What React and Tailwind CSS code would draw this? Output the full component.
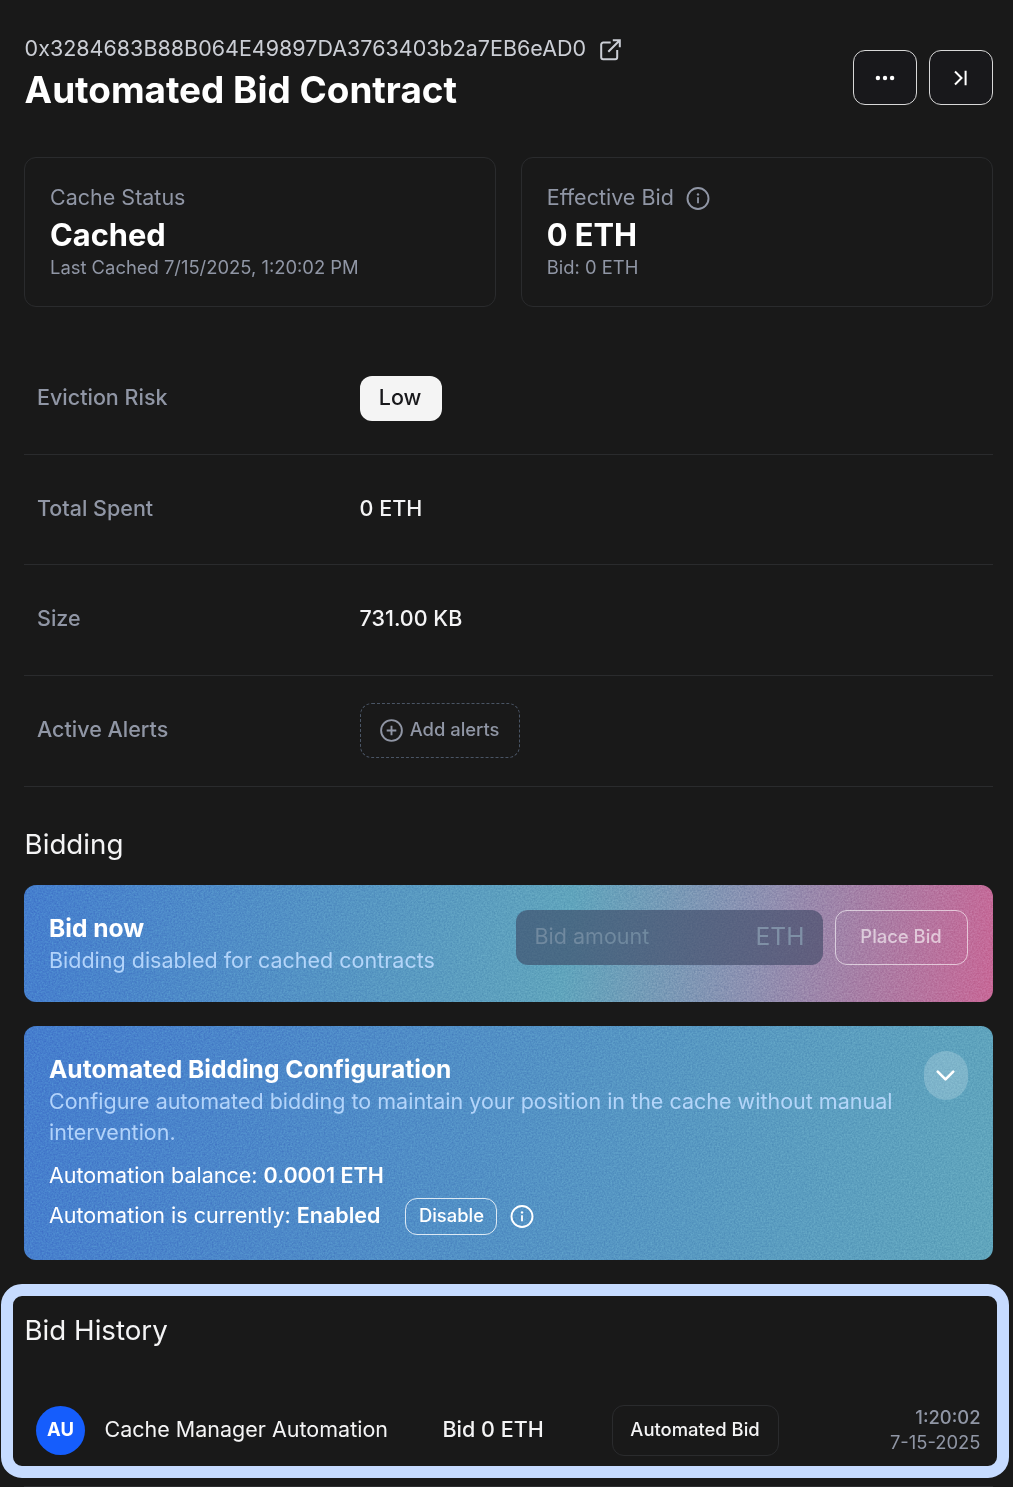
import React from "react";
import { ChevronDown } from "lucide-react";

const MUTED = "text-[#9096a5]";

function Grain({ id }) {
  return (
    <svg className="pointer-events-none absolute inset-0 h-full w-full opacity-20 mix-blend-overlay" aria-hidden="true">
      <filter id={id} colorInterpolationFilters="sRGB">
        <feTurbulence type="fractalNoise" baseFrequency="0.6" numOctaves="2" stitchTiles="stitch" />
        <feColorMatrix type="matrix" values="1 0 0 0 0  1 0 0 0 0  1 0 0 0 0  0 0 0 0 1" />
      </filter>
      <rect width="100%" height="100%" filter={`url(#${id})`} />
    </svg>
  );
}

function InfoIcon({ className }) {
  return (
    <svg className={className} width="25" height="25" viewBox="0 0 25 25" fill="none" stroke="currentColor" strokeWidth="1.9">
      <circle cx="12" cy="12.5" r="10.5" />
      <path d="M12 11.3v6" strokeWidth="1.8" />
      <circle cx="12" cy="8.4" r="1.2" fill="currentColor" stroke="none" />
    </svg>
  );
}

function PlusCircleIcon() {
  return (
    <svg width="25" height="25" viewBox="0 0 25 25" fill="none" stroke="currentColor" strokeWidth="1.9">
      <circle cx="12.5" cy="12.5" r="10.4" />
      <path d="M12.5 7.7v9.6M7.7 12.5h9.6" />
    </svg>
  );
}

function ExternalIcon({ className }) {
  return (
    <svg className={className} width="25" height="25" viewBox="0 0 25 25" fill="none" stroke="currentColor" strokeWidth="2">
      <path d="M12.7 5.6H5.2a2 2 0 0 0-2 2v12.6a2 2 0 0 0 2 2h12a2 2 0 0 0 2-2V13" />
      <path d="M14.8 3.2h7v7M21.8 3.2 10.3 14.7" />
    </svg>
  );
}

function Row({ label, children }) {
  return (
    <div className="flex h-[110.6px] items-center border-b border-[#2a2b2d] pl-[13px]">
      <div className={`w-[322.6px] pb-[3px] text-[21.5px] font-medium leading-[31px] ${MUTED}`}>{label}</div>
      <div className="flex items-center text-[21.5px] font-medium leading-[31px] text-[#f4f4f5]">{children}</div>
    </div>
  );
}

function StatCard({ label, info, value, note }) {
  return (
    <div className="h-[150px] flex-1 rounded-[12px] border border-[#2a2b2d] px-[25px] pt-[24px]">
      <div className={`flex h-[31px] items-center text-[21.5px] ${MUTED}`}>
        <span className="pb-[1px]">{label}</span>
        {info && <InfoIcon className="ml-3 mt-[1px]" />}
      </div>
      <div className="h-[42px] text-[30.8px] font-bold leading-[43px] text-white">{value}</div>
      <div className={`h-[25px] text-[18.4px] leading-[25px] ${MUTED}`}>{note}</div>
    </div>
  );
}

export default function App() {
  return (
    <div className="h-[1487px] w-[1013px] overflow-hidden bg-[#191919] font-['Inter',sans-serif] text-white">
      <div className="pl-[24px] pr-[20.5px]">
        <header className="flex h-[157px] justify-between">
          <div className="pl-[0.6px] pt-[33px]">
            <div className="flex h-[31px] items-center text-[21.5px] text-[#cbced5]">
              0x3284683B88B064E49897DA3763403b2a7EB6eAD0
              <ExternalIcon className="ml-3 mt-[2px]" />
            </div>
            <h1 className="text-[36.9px] font-bold leading-[52px]">Automated Bid Contract</h1>
          </div>
          <div className="flex gap-3 pt-[50px]">
            <button className="flex h-[55px] w-[64px] items-center justify-center rounded-[12px] border border-[#d8d8d8] bg-[#18181b]">
              <svg width="24" height="24" viewBox="0 0 24 24" fill="currentColor">
                <circle cx="4.9" cy="12" r="2.2" />
                <circle cx="12" cy="12" r="2.2" />
                <circle cx="19.1" cy="12" r="2.2" />
              </svg>
            </button>
            <button className="flex h-[55px] w-[64px] items-center justify-center rounded-[12px] border border-[#d8d8d8] bg-[#18181b]">
              <svg width="24" height="24" viewBox="0 0 24 24" fill="none" stroke="currentColor" strokeWidth="2">
                <path d="m6 5.5 6.5 6.5L6 18.5M16.6 4.8v14.4" />
              </svg>
            </button>
          </div>
        </header>

        <section className="flex gap-[25px]">
          <StatCard label="Cache Status" value="Cached" note="Last Cached 7/15/2025, 1:20:02 PM" />
          <StatCard label="Effective Bid" info value="0 ETH" note="Bid: 0 ETH" />
        </section>

        <section className="mt-[37.2px]">
          <Row label="Eviction Risk">
            <span className="flex h-[45px] w-[82px] items-center justify-center rounded-[12px] bg-[#f4f4f4] pb-[2px] pr-[1px] text-[#18181b]">
              Low
            </span>
          </Row>
          <Row label="Total Spent">
            <span className="pb-[3px]">0 ETH</span>
          </Row>
          <Row label="Size">
            <span className="pb-[3px]">731.00 KB</span>
          </Row>
          <Row label="Active Alerts">
            <button className={`flex h-[55px] w-[160px] items-center justify-center gap-[6px] rounded-[12px] border border-dashed border-[#4a5565] pr-[1px] text-[18.4px] font-medium ${MUTED}`}>
              <PlusCircleIcon />
              <span className="pb-[2px]">Add alerts</span>
            </button>
          </Row>
        </section>

        <h2 className="mt-[36.8px] h-[61.6px] pl-[0.6px] text-[27.7px] leading-[43px] text-[#f4f4f5]">Bidding</h2>

        <section className="relative flex h-[117px] justify-between overflow-hidden rounded-[12px] bg-[linear-gradient(97deg,#457ece_0%,#60a4bc_56%,#8f8fb0_76%,#c76897_100%)] pl-[25px] pr-[25px] pt-[25px]">
          <Grain id="grain-bid" />
          <div className="relative">
            <h3 className="text-[24.6px] font-bold leading-[36px]">Bid now</h3>
            <p className="-mt-px text-[21.5px] leading-[31px] text-[#bedbff]/90">Bidding disabled for cached contracts</p>
          </div>
          <div className="relative flex gap-3">
            <div className="flex h-[55px] w-[307px] items-center justify-between rounded-[12px] bg-[#3b4461]/60 pb-[2px] pl-[19px] pr-[18px]">
              <span className="pb-[1px] text-[21.5px] text-[#70899f]">Bid amount</span>
              <span className="text-[24.6px] text-[#7f90a6]">ETH</span>
            </div>
            <button className="flex h-[55px] w-[133px] items-center justify-center rounded-[12px] border border-white/60 pb-[2px] text-[18.4px] font-medium text-white/60">
              Place Bid
            </button>
          </div>
        </section>

        <section className="relative mt-[24px] h-[234px] overflow-hidden rounded-[12px] bg-[linear-gradient(100deg,#457dce_0%,#60a5bc_100%)] pl-[25px] pr-[25px] pt-[25px]">
          <Grain id="grain-auto" />
          <div className="relative flex justify-between">
            <div className="w-[860px]">
              <h3 className="text-[24.6px] font-bold leading-[36px]">Automated Bidding Configuration</h3>
              <p className="-mt-px text-[21.5px] leading-[31px] text-[#bedbff]/90">
                Configure automated bidding to maintain your position in the cache without manual intervention.
              </p>
            </div>
            <button className="flex h-[49px] w-[44px] items-center justify-center rounded-[22px] bg-white/20">
              <ChevronDown size={31} strokeWidth={2.1} />
            </button>
          </div>
          <div className="relative mt-[12px] text-[21.5px] leading-[31px]">
            Automation balance: <span className="font-semibold">0.0001 ETH</span>
          </div>
          <div className="relative mt-[6px] flex h-[40px] items-center text-[21.5px]">
            <span className="pb-[3px]">
              Automation is currently: <span className="font-semibold">Enabled</span>
            </span>
            <button className="ml-[25px] flex h-[37px] w-[92px] items-center justify-center rounded-[12px] border border-white/80 pb-[2px] text-[18.4px] font-medium">
              Disable
            </button>
            <InfoIcon className="ml-[12.5px]" />
          </div>
        </section>
      </div>

      <section className="ml-[0.5px] mt-[24px] h-[194px] w-[1008px] rounded-[21px] border-[12px] border-[#c6dbff] pl-[12px] pr-[16px]">
        <h2 className="pt-[13px] text-[27.7px] leading-[43px] text-[#f4f4f5]">Bid History</h2>
        <div className="mt-[45.8px] flex h-[66px] items-center pl-[11.5px]">
          <div className="flex h-[49px] w-[49px] items-center justify-center rounded-full bg-[#155dfc] pb-[2px] text-[18.4px] font-bold">
            AU
          </div>
          <div className="ml-[19.5px] w-[338px] pb-[3px] text-[21.5px] text-[#f4f4f5]">Cache Manager Automation</div>
          <div className="w-[169px] pb-[3px] text-[21.5px] font-medium text-[#f4f4f5]">Bid 0 ETH</div>
          <div className="flex h-[51px] w-[167px] items-center justify-center rounded-[12px] border border-[#2a2b2d] pb-[2px] text-[18.4px] font-medium text-[#f4f4f5]">
            Automated Bid
          </div>
          <div className={`ml-auto pb-[2px] text-right text-[18.4px] leading-[24.6px] ${MUTED}`}>
            <div className="font-medium">1:20:02</div>
            <div>7-15-2025</div>
          </div>
        </div>
      </section>
      <div className="ml-[24px] mr-[20px] mt-[8px] h-px bg-[#2a2b2d]" />
    </div>
  );
}
